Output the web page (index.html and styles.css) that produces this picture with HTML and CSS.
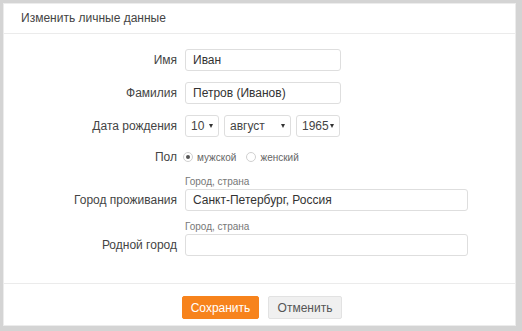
FILE: index.html
```html
<!DOCTYPE html>
<html lang="ru">
<head>
    <meta charset="UTF-8">
    <title>Изменить личные данные</title>
    <link rel="stylesheet" href="styles.css">
</head>
<body>
    <div class="dialog">
        <div class="dialog-header">Изменить личные данные</div>

        <form class="dialog-body">
            <div class="row">
                <label class="row-label">Имя</label>
                <div class="field"><div class="input short">Иван</div></div>
            </div>
            <div class="row">
                <label class="row-label">Фамилия</label>
                <div class="field"><div class="input short">Петров (Иванов)</div></div>
            </div>
            <div class="row">
                <label class="row-label">Дата рождения</label>
                <div class="field dates">
                    <div class="select day"><span>10</span><i class="arrow"></i></div>
                    <div class="select month"><span>август</span><i class="arrow"></i></div>
                    <div class="select year"><span>1965</span><i class="arrow"></i></div>
                </div>
            </div>
            <div class="row row-gender">
                <label class="row-label">Пол</label>
                <div class="field radios">
                    <span class="radio checked"></span><span class="radio-text">мужской</span>
                    <span class="radio"></span><span class="radio-text">женский</span>
                </div>
            </div>
            <div class="row row-city">
                <label class="row-label">Город проживания</label>
                <div class="field">
                    <div class="hint">Город, страна</div>
                    <div class="input wide">Санкт-Петербург, Россия</div>
                </div>
            </div>
            <div class="row row-city">
                <label class="row-label">Родной город</label>
                <div class="field">
                    <div class="hint">Город, страна</div>
                    <div class="input wide"></div>
                </div>
            </div>
        </form>

        <div class="dialog-footer">
            <button type="button" class="btn btn-save">Сохранить</button>
            <button type="button" class="btn btn-cancel">Отменить</button>
        </div>
    </div>
</body>
</html>
```

FILE: styles.css
```css
body {
    margin: 0;
    padding: 3px 6px 5px 3px;
    background-color: #d4d4d4;
    font-family: "Liberation Sans", Arial, sans-serif;
    font-size: 12px;
    color: #444;
    height: 331px;
    box-sizing: border-box;
}

.dialog {
    background-color: #fff;
    border: 1px solid #ececec;
    height: 100%;
    box-sizing: border-box;
    display: flex;
    flex-direction: column;
}

.dialog-header {
    height: 29px;
    line-height: 28px;
    padding-left: 17px;
    border-bottom: 1px solid #ebebeb;
    color: #444;
}

.dialog-body {
    padding: 15px 0 0 0;
    flex: 1;
}

.row {
    display: grid;
    grid-template-columns: 173px 1fr;
    column-gap: 8px;
    align-items: center;
    margin-bottom: 11px;
}

.row-label {
    text-align: right;
    color: #444;
}

.input {
    height: 22px;
    box-sizing: border-box;
    border: 1px solid #dedede;
    border-radius: 3px;
    padding: 0 7px;
    line-height: 20px;
    color: #333;
}

.short {
    width: 156px;
}

.wide {
    width: 283px;
}

.dates {
    display: flex;
    gap: 5px;
}

.select {
    height: 22px;
    box-sizing: border-box;
    border: 1px solid #dedede;
    border-radius: 3px;
    padding: 0 5px;
    display: flex;
    align-items: center;
    justify-content: space-between;
    color: #444;
}

.day {
    width: 34px;
}

.month {
    width: 67px;
}

.year {
    width: 44px;
}

.arrow {
    width: 0;
    height: 0;
    border-left: 2.5px solid transparent;
    border-right: 2.5px solid transparent;
    border-top: 4px solid #333;
}

.row-gender {
    margin-top: 13px;
    margin-bottom: 12px;
}

.radios {
    display: flex;
    align-items: center;
    font-size: 10px;
    color: #666;
}

.radio {
    width: 8px;
    height: 8px;
    border: 1px solid #d0d0d0;
    border-radius: 50%;
    margin: 0 4px 0 -2px;
    position: relative;
}

.radio.checked::after {
    content: "";
    position: absolute;
    left: 2px;
    top: 2px;
    width: 4px;
    height: 4px;
    border-radius: 50%;
    background-color: #555;
}

.radio-text {
    margin-right: 12px;
}

.row-city {
    align-items: end;
    margin-bottom: 10px;
}

.row-city .row-label {
    line-height: 22px;
}

.hint {
    font-size: 10px;
    color: #777;
    line-height: 12px;
    margin-bottom: 1px;
}

.dialog-footer {
    border-top: 1px solid #ebebeb;
    padding: 12px 0 6px 178px;
    display: flex;
    gap: 9px;
}

.btn {
    height: 23px;
    font-family: inherit;
    font-size: 12px;
    border-radius: 2px;
    cursor: pointer;
}

.btn-save {
    width: 77px;
    background-color: #f7831c;
    border: 1px solid #f7831c;
    color: #fff;
}

.btn-cancel {
    width: 74px;
    background-color: #f0f0f0;
    border: 1px solid #e2e2e2;
    color: #555;
}
```
